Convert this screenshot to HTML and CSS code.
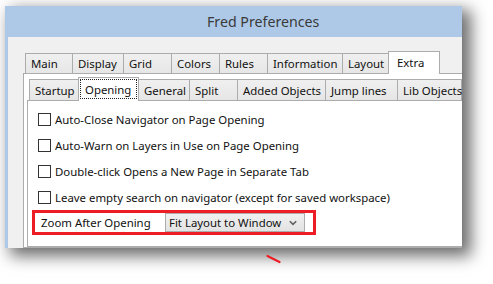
FILE: index.html
```html
<!DOCTYPE html>
<html>
<head>
<meta charset="utf-8">
<link rel="stylesheet" href="styles.css">
</head>
<body>
<div class="window">
  <div class="titlebar"><span class="title">Fred Preferences</span></div>
  <div class="client">
    <div class="tabs outer-tabs">
      <div class="tab">Main</div>
      <div class="tab">Display</div>
      <div class="tab">Grid</div>
      <div class="tab">Colors</div>
      <div class="tab">Rules</div>
      <div class="tab">Information</div>
      <div class="tab">Layout</div>
      <div class="tab active">Extra</div>
    </div>
    <div class="outer-panel">
      <div class="tabs inner-tabs">
        <div class="tab">Startup</div>
        <div class="tab active"><span class="focus">Opening</span></div>
        <div class="tab">General</div>
        <div class="tab">Split</div>
        <div class="tab">Added Objects</div>
        <div class="tab">Jump lines</div>
        <div class="tab">Lib Objects</div>
      </div>
      <div class="inner-panel">
        <label class="check"><span class="box"></span>Auto-Close Navigator on Page Opening</label>
        <label class="check"><span class="box"></span>Auto-Warn on Layers in Use on Page Opening</label>
        <label class="check"><span class="box"></span>Double-click Opens a New Page in Separate Tab</label>
        <label class="check"><span class="box"></span>Leave empty search on navigator (except for saved workspace)</label>
        <div class="zoom-row">
          <span class="zoom-label">Zoom After Opening</span>
          <div class="combo">
            <span class="combo-text">Fit Layout to Window</span>
            <svg class="chev" width="8" height="6" viewBox="0 0 8 6"><path d="M0.8 1.2 L4 4.4 L7.2 1.2" fill="none" stroke="#606060" stroke-width="1.6"/></svg>
          </div>
        </div>
      </div>
    </div>
  </div>
</div>
<svg class="mark" width="16" height="12" viewBox="0 0 16 12"><path d="M1.5 2 L13.5 8" stroke="#ee1c24" stroke-width="2.2" stroke-linecap="round"/></svg>
</body>
</html>
```
FILE: styles.css
```css
html, body {
  margin: 0;
  padding: 0;
}
body {
  background: #ffffff;
  width: 493px;
  height: 284px;
  overflow: hidden;
  position: relative;
  font-family: "Noto Sans", "Open Sans", sans-serif;
  font-size: 11.4px;
  color: #111;
}
.window {
  margin: 6px 0 0 5px;
  width: 457px;
  height: 242px;
  box-sizing: border-box;
  border-left: 3px solid #adc9e7;
  display: flex;
  flex-direction: column;
  overflow: hidden;
  box-shadow: 7px 6px 15px 2px rgba(0, 0, 0, 0.58);
}
.titlebar {
  height: 31px;
  flex: none;
  background: #adc9e7;
  display: flex;
  align-items: center;
  padding-left: 199px;
}
.title {
  font-size: 14.2px;
  color: #3a3a3a;
}
.client {
  flex: 1;
  background: #f0f0f0;
  padding: 14px 0 0 15px;
  display: flex;
  flex-direction: column;
  min-height: 0;
}
.tabs {
  display: flex;
  align-items: flex-end;
  flex: none;
  position: relative;
  z-index: 1;
}
.outer-tabs {
  height: 22px;
  padding-left: 3px;
}
.tab {
  height: 20px;
  box-sizing: border-box;
  border: 1px solid #acacac;
  border-bottom: none;
  background: linear-gradient(#f0f0f0, #e6e6e6);
  margin-left: -1px;
  padding-left: 5px;
  display: flex;
  align-items: center;
  white-space: nowrap;
  flex: none;
}
.tab.active {
  background: #ffffff;
  height: 23px;
  margin-left: -3px;
  margin-right: -2px;
  margin-bottom: -1px;
  position: relative;
  z-index: 2;
  padding-left: 8px;
  padding-bottom: 2px;
}
.outer-tabs .tab:nth-child(1) { width: 48px; }
.outer-tabs .tab:nth-child(2) { width: 52px; }
.outer-tabs .tab:nth-child(3) { width: 49px; }
.outer-tabs .tab:nth-child(4) { width: 49px; }
.outer-tabs .tab:nth-child(5) { width: 49px; }
.outer-tabs .tab:nth-child(6) { width: 76px; }
.outer-tabs .tab:nth-child(7) { width: 49px; }
.outer-tabs .tab:nth-child(8) { width: 52px; }

.outer-panel {
  flex: 1;
  width: 500px;
  border: 1px solid #acacac;
  background: #ffffff;
  padding: 3px 0 0 3px;
  display: flex;
  flex-direction: column;
}
.inner-tabs {
  height: 23px;
  padding-left: 3px;
}
.inner-tabs .tab { height: 21px; }
.inner-tabs .tab.active {
  height: 24px;
  padding: 1px 1px 2px 1px;
  align-items: stretch;
}
.focus {
  flex: 1;
  border: 1px dotted #222;
  display: flex;
  align-items: center;
  padding-left: 4px;
}
.inner-tabs .tab:nth-child(1) { width: 52px; }
.inner-tabs .tab:nth-child(2) { width: 61px; }
.inner-tabs .tab:nth-child(3) { width: 54px; padding-left: 7px; }
.inner-tabs .tab:nth-child(4) { width: 49px; }
.inner-tabs .tab:nth-child(5) { width: 89px; }
.inner-tabs .tab:nth-child(6) { width: 73px; }
.inner-tabs .tab:nth-child(7) { width: 65px; }

.inner-panel {
  flex: 1;
  border: 1px solid #acacac;
  background: #ffffff;
  padding: 5px 0 0 0;
  display: flex;
  flex-direction: column;
}
.check {
  height: 26px;
  display: flex;
  align-items: center;
  gap: 4px;
  padding-left: 10px;
  white-space: nowrap;
}
.box {
  width: 13px;
  height: 13px;
  box-sizing: border-box;
  border: 1px solid #333;
  background: #fff;
  flex: none;
}
.zoom-row {
  margin-left: 4px;
  width: 284px;
  height: 25px;
  box-sizing: border-box;
  border: 3px solid #ee1c24;
  display: flex;
  align-items: stretch;
}
.zoom-label {
  width: 130px;
  box-sizing: border-box;
  padding-left: 6px;
  display: flex;
  align-items: center;
  white-space: nowrap;
}
.combo {
  width: 140px;
  box-sizing: border-box;
  border: 1px solid #acacac;
  background: linear-gradient(#f0f0f0, #e3e3e3);
  display: flex;
  align-items: center;
  padding: 0 7px 0 3px;
  justify-content: space-between;
}
.combo-text { white-space: nowrap; }
.chev { flex: none; }
.mark {
  position: absolute;
  left: 266px;
  top: 254px;
}
```
